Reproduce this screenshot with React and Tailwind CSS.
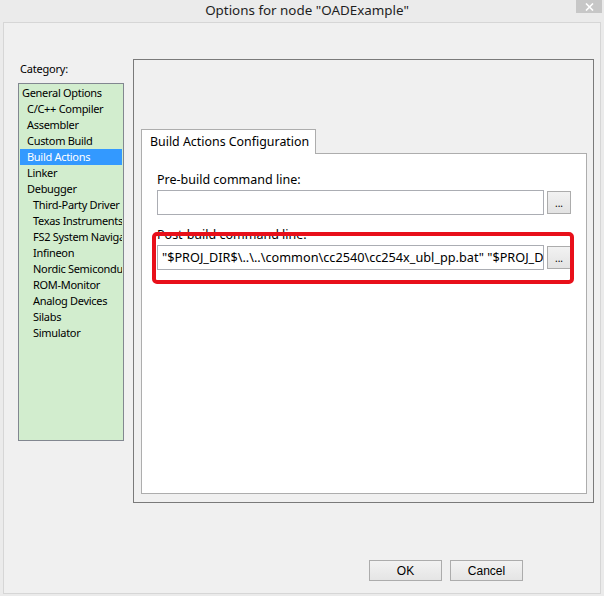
import React from 'react';

const F = { fontFamily: '"Noto Sans", "Liberation Sans", sans-serif' };

const items = [
  ['General Options', 0],
  ['C/C++ Compiler', 1],
  ['Assembler', 1],
  ['Custom Build', 1],
  ['Build Actions', 1, true],
  ['Linker', 1],
  ['Debugger', 1],
  ['Third-Party Driver', 2],
  ['Texas Instruments', 2],
  ['FS2 System Navigator', 2],
  ['Infineon', 2],
  ['Nordic Semiconductor', 2],
  ['ROM-Monitor', 2],
  ['Analog Devices', 2],
  ['Silabs', 2],
  ['Simulator', 2],
];

function Dots() {
  return (
    <div className="w-[24px] h-[23px] mt-[1px] border border-[#acacac] bg-gradient-to-b from-[#f2f2f2] to-[#e3e3e3] flex items-center justify-center text-[10px] leading-none text-black">
      <span className="mt-[1px]">...</span>
    </div>
  );
}

export default function App() {
  const post = '"$PROJ_DIR$\\..\\..\\common\\cc2540\\cc254x_ubl_pp.bat" "$PROJ_DIR$\\..\\..\\common\\cc2540\\cc254x_ubl_pp.bat"';
  return (
    <div className="w-[604px] h-[596px] bg-[#ebebeb] flex flex-col overflow-hidden text-black" style={F}>
      {/* title bar */}
      <div className="relative h-[22px] shrink-0 flex items-center justify-center pl-[10px]">
        <span className="text-[13.4px] leading-none -mt-[1px] text-[#1e1e1e]">Options for node "OADExample"</span>
        <div className="absolute top-0 right-[2px] w-[26px] h-[13px] bg-[#c7c7c7] flex items-center justify-center">
          <svg width="9" height="8" viewBox="0 0 9 8">
            <path d="M1 0.5 L8 7.5 M8 0.5 L1 7.5" stroke="#fff" strokeWidth="1.6" />
          </svg>
        </div>
      </div>
      {/* client */}
      <div className="mx-[3px] h-[572px] border border-[#d6d6d6] bg-[#f0f0f0] flex flex-col">
        <div className="flex items-start">
          {/* category column */}
          <div className="ml-[14px] mt-[38px] w-[106px] flex flex-col">
            <div className="text-[11px] leading-[16px] h-[16px] pl-[2px] tracking-[-0.2px]">Category:</div>
            <div className="mt-[6px] h-[358px] border border-[#828790] bg-[#d2edce] pt-[1px] px-[1px] overflow-hidden">
              {items.map(([t, lvl, sel]) => (
                <div
                  key={t}
                  className={
                    'h-[16px] leading-[16px] text-[11px] whitespace-nowrap overflow-hidden tracking-[-0.3px] ' +
                    (lvl === 0 ? 'pl-[2px] ' : lvl === 1 ? 'pl-[7px] ' : 'pl-[13px] ') +
                    (sel ? 'bg-[#3399ff] text-white' : 'text-black')
                  }
                >
                  {t}
                </div>
              ))}
            </div>
          </div>
          {/* right panel */}
          <div className="ml-[9px] mt-[36px] w-[461px] h-[444px] border border-[#7a7a7a] pl-[7px] pr-[6px] pt-[69px] pb-[8px] flex flex-col">
            <div className="relative z-10 self-start h-[25px] w-[175px] border border-b-0 border-[#adadad] bg-white pl-[8px] text-[12.4px] leading-[24px]">
              Build Actions Configuration
            </div>
            <div className="relative -mt-[1px] flex-1 border border-[#adadad] bg-white pl-[15px] pr-[14px]">
              <div className="mt-[18px] text-[12.5px] leading-[16px] h-[16px]">Pre-build command line:</div>
              <div className="mt-[2px] flex gap-[3px]">
                <div className="w-[387px] h-[25px] border border-[#abadb3] bg-white"></div>
                <Dots />
              </div>
              <div className="mt-[12px] text-[12.5px] leading-[16px] h-[16px]">Post-build command line:</div>
              <div className="mt-[2px] flex gap-[3px]">
                <div className="w-[387px] h-[25px] border border-[#abadb3] bg-white overflow-hidden whitespace-nowrap pl-[4px] text-[12.7px] leading-[23px]">
                  {post}
                </div>
                <Dots />
              </div>
              <div className="absolute left-[10px] top-[78px] w-[422px] h-[52px] border-[4px] border-[#e8101a] rounded-[5px]"></div>
            </div>
          </div>
        </div>
        {/* buttons */}
        <div className="mt-[57px] pl-[365px] flex gap-[8px]">
          <button className="w-[73px] h-[21px] border border-[#acacac] bg-gradient-to-b from-[#f2f2f2] to-[#e5e5e5] text-[12px] leading-none" style={{ fontFamily: '"Liberation Sans", sans-serif' }}>OK</button>
          <button className="w-[73px] h-[21px] border border-[#acacac] bg-gradient-to-b from-[#f2f2f2] to-[#e5e5e5] text-[12px] leading-none" style={{ fontFamily: '"Liberation Sans", sans-serif' }}>Cancel</button>
        </div>
      </div>
    </div>
  );
}
